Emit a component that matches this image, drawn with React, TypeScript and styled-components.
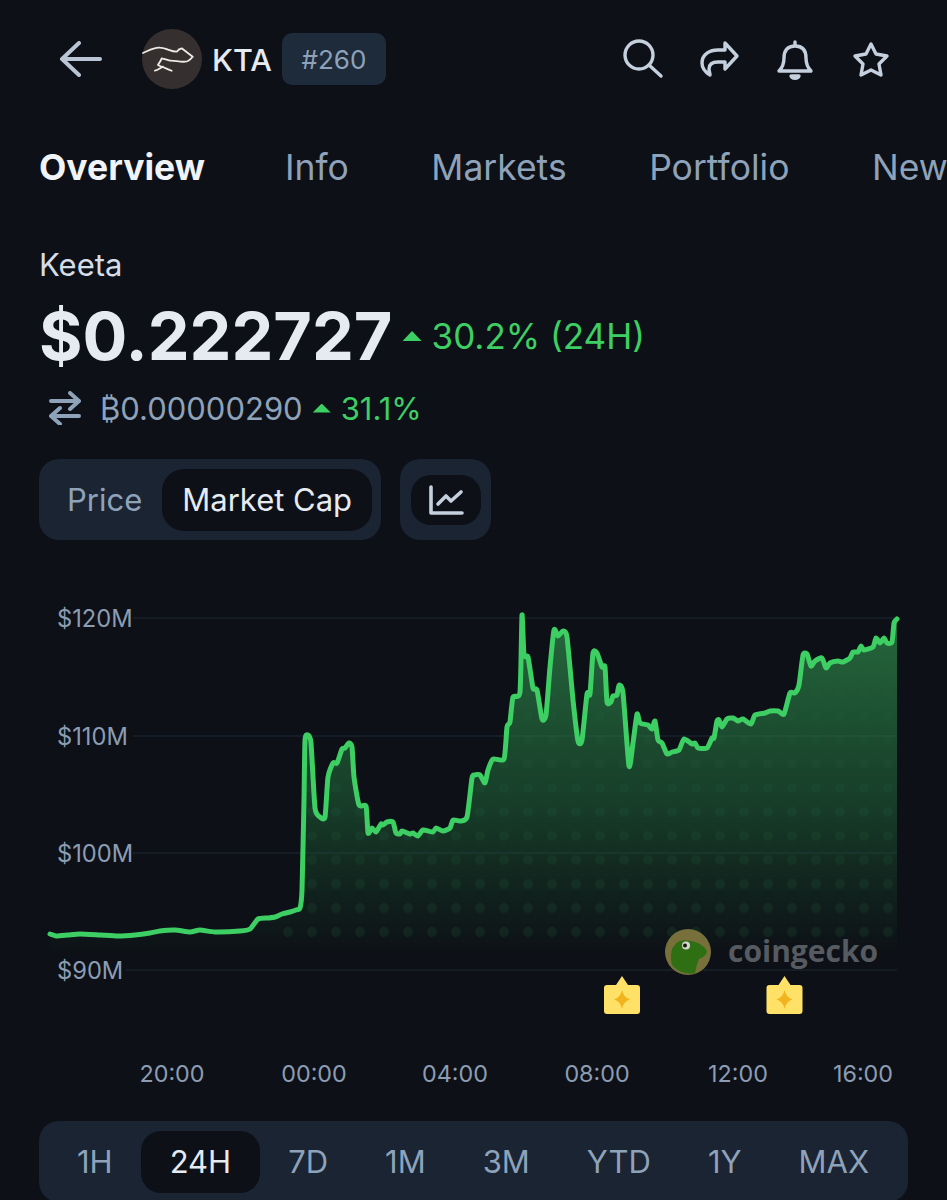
import styled, { createGlobalStyle } from "styled-components";

const GlobalStyle = createGlobalStyle`
  html, body {
    margin: 0;
    padding: 0;
    background: #0d1016;
    font-family: "Inter", "Liberation Sans", sans-serif;
  }
`;

const LINE: [number, number][] = [
  [50, 934], [56, 936], [68, 935], [80, 934], [100, 935], [118, 936], [135, 935], [150, 933], [160, 931],
  [175, 930], [190, 932], [200, 930], [215, 932], [240, 931], [250, 929], [258, 919], [268, 918], [275, 917],
  [282, 914], [290, 912], [296, 910], [300, 908], [302, 890], [304, 800], [305, 740], [308, 735], [311, 743],
  [315, 808], [320, 817], [325, 817], [328, 777], [333, 763], [337, 763], [342, 749], [345, 748], [349, 743],
  [352, 747], [354, 777], [359, 805], [366, 806], [368, 833], [372, 828], [376, 832], [381, 824], [383, 825],
  [387, 822], [393, 822], [396, 833], [400, 834], [402, 831], [410, 834], [413, 833], [418, 836], [423, 830],
  [433, 832], [436, 828], [443, 831], [450, 828], [453, 820], [460, 821], [467, 817], [472, 778], [475, 775],
  [480, 775], [485, 783], [488, 770], [493, 759], [504, 759], [507, 727], [510, 722], [513, 697], [520, 692],
  [522, 615], [524, 655], [528, 657], [533, 688], [537, 690], [542, 719], [546, 715], [550, 667], [554, 630],
  [558, 636], [563, 631], [567, 637], [573, 700], [578, 741], [582, 740], [587, 694], [590, 694], [593, 653],
  [597, 653], [602, 667], [605, 667], [607, 702], [611, 702], [613, 696], [617, 695], [619, 685], [623, 693],
  [629, 766], [633, 743], [637, 714], [640, 723], [648, 725], [652, 729], [655, 721], [658, 740], [662, 743],
  [667, 754], [672, 752], [679, 750], [684, 739], [692, 744], [695, 743], [698, 748], [707, 748], [712, 738],
  [714, 738], [717, 721], [719, 720], [722, 727], [727, 719], [733, 718], [738, 721], [743, 719], [751, 724],
  [755, 715], [765, 713], [770, 711], [778, 711], [784, 714], [790, 693], [795, 693], [799, 685], [803, 655],
  [807, 654], [811, 666], [815, 661], [822, 658], [826, 668], [830, 663], [838, 661], [843, 662], [850, 658],
  [853, 652], [858, 652], [861, 646], [864, 650], [873, 647], [876, 638], [880, 643], [884, 638], [887, 643],
  [892, 642], [894, 623], [897, 619],
];

const CHART_TOP = 600;

// soft spline through the samples, the real line has no hard corners
function smoothPath(points: [number, number][]) {
  const pts = points.map(([x, y]) => [x, y - CHART_TOP]);
  let d = `M${pts[0][0]} ${pts[0][1]}`;
  for (let i = 0; i < pts.length - 1; i++) {
    const p0 = pts[Math.max(i - 1, 0)];
    const p1 = pts[i];
    const p2 = pts[i + 1];
    const p3 = pts[Math.min(i + 2, pts.length - 1)];
    const c1x = p1[0] + (p2[0] - p0[0]) / 10;
    const c1y = p1[1] + (p2[1] - p0[1]) / 10;
    const c2x = p2[0] - (p3[0] - p1[0]) / 10;
    const c2y = p2[1] - (p3[1] - p1[1]) / 10;
    d += ` C${c1x.toFixed(1)} ${c1y.toFixed(1)} ${c2x.toFixed(1)} ${c2y.toFixed(1)} ${p2[0]} ${p2[1]}`;
  }
  return d;
}

const linePath = smoothPath(LINE);
const areaPath = `${linePath} L897 370 L50 370 Z`;

const GRID = [
  { label: "$120M", y: 18, from: 133 },
  { label: "$110M", y: 136, from: 133 },
  { label: "$100M", y: 253, from: 133 },
  { label: "$90M", y: 370, from: 126 },
];

const TIMES = [
  { label: "20:00", x: 172 },
  { label: "00:00", x: 314 },
  { label: "04:00", x: 455 },
  { label: "08:00", x: 597 },
  { label: "12:00", x: 738 },
  { label: "16:00", x: 863 },
];

const TABS = ["Overview", "Info", "Markets", "Portfolio", "News"];
const RANGES = ["1H", "24H", "7D", "1M", "3M", "YTD", "1Y", "MAX"];

function Marker({ x }: { x: number }) {
  return (
    <g transform={`translate(${x} 376)`}>
      <path
        d="M0 0 L6 9 H15 a3 3 0 0 1 3 3 V35 a3 3 0 0 1 -3 3 H-15 a3 3 0 0 1 -3 -3 V12 a3 3 0 0 1 3 -3 H-6 Z"
        fill="#ffe168"
      />
      <path d="M0 14 Q1.5 21.5 8 23.5 Q1.5 25.5 0 33 Q-1.5 25.5 -8 23.5 Q-1.5 21.5 0 14 Z" fill="#f2b41e" />
    </g>
  );
}

function MarketChart() {
  return (
    <ChartSvg viewBox="0 0 947 500" width="947" height="500">
      <defs>
        <linearGradient id="areaFill" gradientUnits="userSpaceOnUse" x1="0" y1="20" x2="0" y2="356">
          <stop offset="0" stopColor="#2f8a4c" stopOpacity="0.72" />
          <stop offset="0.55" stopColor="#23743f" stopOpacity="0.45" />
          <stop offset="1" stopColor="#1c6a38" stopOpacity="0" />
        </linearGradient>
        <pattern id="dots" patternUnits="userSpaceOnUse" x="276" y="8" width="24" height="24">
          <circle cx="12" cy="12" r="5" fill="#4fd27a" />
        </pattern>
        <linearGradient id="dotFade" gradientUnits="userSpaceOnUse" x1="0" y1="60" x2="0" y2="340">
          <stop offset="0" stopColor="#fff" stopOpacity="0.01" />
          <stop offset="1" stopColor="#fff" stopOpacity="0.08" />
        </linearGradient>
        <mask id="dotMask" maskUnits="userSpaceOnUse" x="0" y="0" width="947" height="500">
          <path d={areaPath} fill="url(#dotFade)" />
        </mask>
      </defs>
      {GRID.map((g) => (
        <line key={g.y} x1={g.from} x2="897" y1={g.y} y2={g.y} stroke="#212835" strokeWidth="1.2" />
      ))}
      <path d={areaPath} fill="url(#areaFill)" />
      <rect x="280" y="0" width="617" height="345" fill="url(#dots)" mask="url(#dotMask)" />
      <path d={linePath} fill="none" stroke="#3dcf63" strokeWidth="5" strokeLinejoin="round" strokeLinecap="round" />
      {GRID.map((g) => (
        <AxisText key={g.label} x="57" y={g.y + 9}>
          {g.label}
        </AxisText>
      ))}
      {TIMES.map((t) => (
        <TimeText key={t.label} x={t.x} y="482" textAnchor="middle">
          {t.label}
        </TimeText>
      ))}
      <Marker x={622} />
      <Marker x={784.5} />
    </ChartSvg>
  );
}

export default function App() {
  return (
    <Page>
      <GlobalStyle />
      <Header>
        <BackIcon width="44" height="36" viewBox="0 0 44 36">
          <path d="M20 2 L3 18 L20 34 M3 18 H41" />
        </BackIcon>
        <CoinLogo viewBox="0 0 60 60" width="60" height="60">
          <circle cx="30" cy="30" r="30" fill="#35302f" />
          <path
            d="M1 24 C6 22 12 18 18 18.7 C24 19 30 23 34.7 22.7 C36 21 38 19.5 39.7 19.3 L50.7 27.7 C48 31 45 32.7 43 32.7 C37 33 33 31.5 28 31.7 C25 31 22 29.7 19.7 29.3 C19 32 17 34 16 36 C20 38 26 40 29.7 41.7 M13 41.7 C16 41 18 39 21 37.7"
            fill="none"
            stroke="#eeeae6"
            strokeWidth="1.8"
            strokeLinecap="round"
            strokeLinejoin="round"
          />
        </CoinLogo>
        <Ticker>KTA</Ticker>
        <RankBadge>#260</RankBadge>
        <HeaderActions>
          <ActionIcon viewBox="0 0 38 38" width="38" height="38">
            <circle cx="15" cy="15" r="14" />
            <path d="M25 25 L37 36" />
          </ActionIcon>
          <ActionIcon viewBox="0 0 38 38" width="38" height="38">
            <path d="M25 3 L37 16 L25 29 V22 H18 C13 22 9 24 9 29 C9 31 10 33 10 35 C5 32 2 28 2 23 C2 14 10 10 18 10 H25 Z" />
          </ActionIcon>
          <ActionIcon viewBox="0 0 38 38" width="38" height="38">
            <path d="M3 31 C7 27 8 24 8 18 C8 10 12 6 19 6 C26 6 30 10 30 18 C30 24 31 27 35 31 Z" />
            <path d="M19 2 V5" />
            <path d="M15 36 H23 C22 39 16 39 15 36 Z" fill="#c5d0de" />
          </ActionIcon>
          <ActionIcon viewBox="0 0 38 38" width="38" height="38">
            <path d="M19 4 L24 14 L35 16 L27 24 L29 35 L19 30 L9 35 L11 24 L3 16 L14 14 Z" />
          </ActionIcon>
        </HeaderActions>
      </Header>

      <Tabs>
        {TABS.map((tab, i) => (
          <Tab key={tab} $active={i === 0}>
            {tab}
          </Tab>
        ))}
      </Tabs>

      <CoinName>Keeta</CoinName>
      <PriceRow>
        <Price>$0.222727</Price>
        <UpArrow $size={19} />
        <Change>30.2% (24H)</Change>
      </PriceRow>
      <BtcRow>
        <SwapIcon viewBox="0 0 32 34" width="32" height="34">
          <path d="M2 10 H30 M21 2 L30 10 L21 18 M30 25 H2 M11 17 L2 25 L11 33" />
        </SwapIcon>
        <BtcPrice>₿0.00000290</BtcPrice>
        <UpArrow $size={18} />
        <BtcChange>31.1%</BtcChange>
      </BtcRow>

      <Controls>
        <Segment>
          <SegmentItem>Price</SegmentItem>
          <SegmentItem $active>Market Cap</SegmentItem>
        </Segment>
        <ChartToggle>
          <ChartToggleInner>
            <svg viewBox="0 0 36 32" width="36" height="32" fill="none" stroke="#c5d0de" strokeWidth="3.6" strokeLinecap="round" strokeLinejoin="round">
              <path d="M3 3 V29 H34" />
              <path d="M10 20 L18 12 L23 17 L33 8" />
            </svg>
          </ChartToggleInner>
        </ChartToggle>
      </Controls>

      <ChartWrap>
        <MarketChart />
        <Watermark>
          <svg viewBox="0 0 46 46" width="46" height="46">
            <circle cx="23" cy="23" r="23" fill="#77703a" />
            <path d="M7 36 C5 28 6 20 9 17 C12 12 18 10 26 12 C33 13 41 18 42 23 C40 28 36 29 34 30 C32 35 31 39 30 44 C24 46 14 44 7 36 Z" fill="#2f6f14" />
            <circle cx="21" cy="16.5" r="4" fill="#d5d5d0" />
            <circle cx="20" cy="16.5" r="2" fill="#16180f" />
          </svg>
          <WatermarkText>coingecko</WatermarkText>
        </Watermark>
      </ChartWrap>

      <RangeBar>
        {RANGES.map((range) => (
          <RangeItem key={range} $active={range === "24H"}>
            {range}
          </RangeItem>
        ))}
      </RangeBar>
    </Page>
  );
}

const Page = styled.div`
  width: 947px;
  height: 1200px;
  overflow: hidden;
  background: #0d1016;
  color: #e6ebf2;
`;

const Header = styled.header`
  display: flex;
  align-items: center;
  height: 52px;
  padding: 33px 57px 0 59px;
`;

const BackIcon = styled.svg`
  fill: none;
  stroke: #b9c5d5;
  stroke-width: 4;
  stroke-linecap: round;
  stroke-linejoin: round;
  margin-right: 39px;
`;

const CoinLogo = styled.svg`
  flex: none;
  margin-right: 10px;
`;

const Ticker = styled.span`
  font-size: 30.5px;
  font-weight: 500;
  color: #e6ebf2;
  margin-right: 10px;
`;

const RankBadge = styled.span`
  display: flex;
  align-items: center;
  justify-content: center;
  width: 104px;
  height: 52px;
  border-radius: 10px;
  background: #1e2b3b;
  color: #8ea2ba;
  font-size: 26px;
`;

const HeaderActions = styled.div`
  display: flex;
  gap: 38px;
  margin-left: auto;
`;

const ActionIcon = styled.svg`
  fill: none;
  stroke: #c5d0de;
  stroke-width: 3.4;
  stroke-linecap: round;
  stroke-linejoin: round;
  overflow: visible;
`;

const Tabs = styled.nav`
  display: flex;
  gap: 82.5px;
  margin-top: 63px;
  padding-left: 39px;
  white-space: nowrap;
`;

const Tab = styled.span<{ $active?: boolean }>`
  font-size: 35.5px;
  line-height: 40px;
  font-weight: ${(p) => (p.$active ? 700 : 400)};
  color: ${(p) => (p.$active ? "#f0f3f7" : "#8ea2ba")};
  margin-right: ${(p) => (p.$active ? "-2.5px" : "0")};
`;

const CoinName = styled.div`
  margin-top: 59px;
  padding-left: 39px;
  font-size: 31px;
  line-height: 36px;
  color: #d6dde6;
`;

const PriceRow = styled.div`
  display: flex;
  align-items: center;
  margin-top: 18px;
  padding-left: 39px;
  height: 70px;
`;

const Price = styled.span`
  font-size: 66.5px;
  font-weight: 700;
  color: #e6ebf2;
  margin-right: 10px;
`;

const UpArrow = styled.span<{ $size: number }>`
  width: ${(p) => p.$size}px;
  height: ${(p) => Math.round(p.$size * 0.5)}px;
  background: #3dcf63;
  clip-path: polygon(50% 0, 100% 100%, 0 100%);
  margin-right: 10px;
`;

const Change = styled.span`
  font-size: 35px;
  color: #3dcf63;
`;

const BtcRow = styled.div`
  display: flex;
  align-items: center;
  margin-top: 17px;
  padding-left: 49px;
  height: 40px;
`;

const SwapIcon = styled.svg`
  fill: none;
  stroke: #8ea2ba;
  stroke-width: 4;
  stroke-linecap: round;
  stroke-linejoin: round;
  margin-right: 19px;
`;

const BtcPrice = styled.span`
  font-size: 31px;
  color: #8ea2ba;
  margin-right: 10px;
`;

const BtcChange = styled.span`
  font-size: 31px;
  color: #3dcf63;
`;

const Controls = styled.div`
  display: flex;
  gap: 19px;
  margin-top: 31px;
  padding-left: 39px;
`;

const Segment = styled.div`
  display: flex;
  align-items: center;
  height: 81px;
  padding: 0 9px 0 8px;
  border-radius: 20px;
  background: #1a2432;
`;

const SegmentItem = styled.span<{ $active?: boolean }>`
  display: flex;
  align-items: center;
  height: 62px;
  padding: 0 20px;
  border-radius: 22px;
  font-size: 31px;
  background: ${(p) => (p.$active ? "#0d1016" : "transparent")};
  color: ${(p) => (p.$active ? "#e6ebf2" : "#8ea2ba")};
`;

const ChartToggle = styled.div`
  display: flex;
  align-items: center;
  justify-content: center;
  width: 91px;
  height: 81px;
  border-radius: 20px;
  background: #1a2432;
`;

const ChartToggleInner = styled.div`
  display: flex;
  align-items: center;
  justify-content: center;
  width: 70px;
  height: 50px;
  border-radius: 20px;
  background: #0d1016;
`;

const ChartWrap = styled.div`
  position: relative;
  margin-top: 60px;
  height: 500px;
`;

const ChartSvg = styled.svg`
  display: block;
`;

const AxisText = styled.text`
  font-family: "Inter", "Liberation Sans", sans-serif;
  font-size: 23.7px;
  fill: #8b9cb3;
`;

const TimeText = styled(AxisText)`
  font-size: 23.3px;
`;

const Watermark = styled.div`
  position: absolute;
  left: 665px;
  top: 329px;
  display: flex;
  align-items: center;
  gap: 17px;
`;

const WatermarkText = styled.span`
  font-family: "Open Sans", sans-serif;
  font-size: 30px;
  font-weight: 700;
  color: #565a61;
  margin-top: -4px;
`;

const RangeBar = styled.div`
  display: flex;
  align-items: center;
  margin: 21px 0 0 39px;
  width: 869px;
  height: 81px;
  padding: 0 9px 0 9.5px;
  box-sizing: border-box;
  border-radius: 20px;
  background: #1a2432;
`;

const RangeItem = styled.span<{ $active?: boolean }>`
  display: flex;
  align-items: center;
  height: 62px;
  padding: 0 28.5px;
  border-radius: 20px;
  font-size: 31px;
  white-space: nowrap;
  background: ${(p) => (p.$active ? "#0d1016" : "transparent")};
  color: ${(p) => (p.$active ? "#e6ebf2" : "#8ea2ba")};
`;
